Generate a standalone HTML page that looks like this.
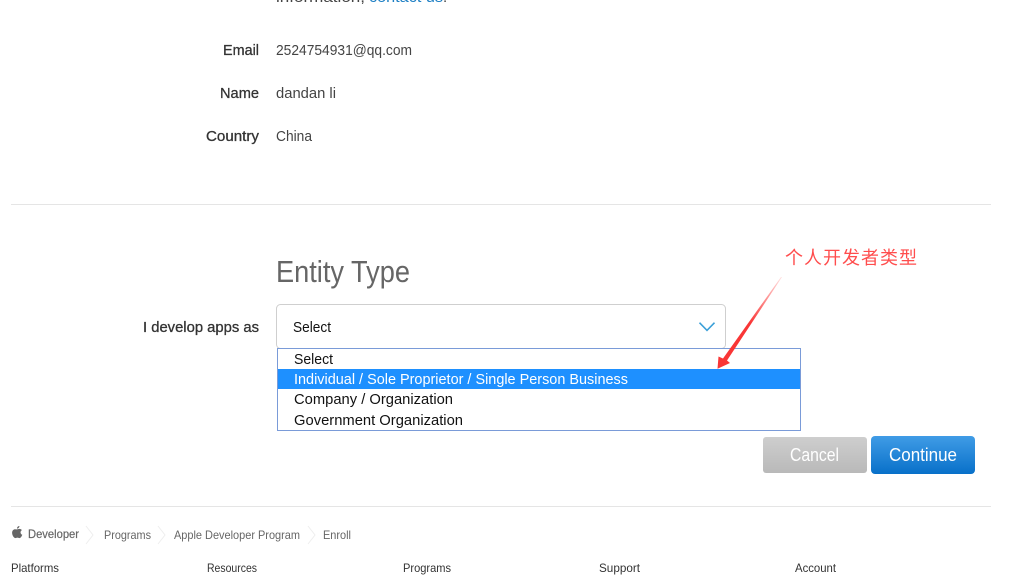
<!DOCTYPE html>
<html lang="en">
<head>
<meta charset="utf-8">
<title>Enroll</title>
<style>
html,body{margin:0;padding:0;width:1028px;height:582px;overflow:hidden;background:#fff}
svg{display:block;position:absolute;left:0;top:0}
text{font-family:"Liberation Sans","Noto Sans CJK SC",sans-serif;white-space:pre}
.v{font-size:15px;fill:#444}
.l{font-size:15px;fill:#333;stroke:#333;stroke-width:.3}
.o{font-size:15px;fill:#111}
.c{font-size:12px;fill:#666}
.f{font-size:12px;fill:#333}
</style>
</head>
<body>
<svg width="1028" height="582" viewBox="0 0 1028 582" xmlns="http://www.w3.org/2000/svg">
<defs>
<linearGradient id="gc" x1="0" y1="0" x2="0" y2="1"><stop offset="0" stop-color="#cecece"/><stop offset="1" stop-color="#b9b9b9"/></linearGradient>
<linearGradient id="gb" x1="0" y1="0" x2="0" y2="1"><stop offset="0" stop-color="#409ce6"/><stop offset="1" stop-color="#0870c9"/></linearGradient>
<linearGradient id="ga" gradientUnits="userSpaceOnUse" x1="782" y1="277" x2="750" y2="323"><stop offset="0" stop-color="#ff3b3b" stop-opacity=".15"/><stop offset="1" stop-color="#f93636"/></linearGradient>
</defs>

<text x="276" y="2" class="v" textLength="89" lengthAdjust="spacingAndGlyphs">information,</text>
<text x="369" y="2" class="v" style="fill:#1d7fc4" textLength="74" lengthAdjust="spacingAndGlyphs">contact us</text>
<text x="443" y="2" class="v">.</text>

<text x="223" y="55" class="l" textLength="36" lengthAdjust="spacingAndGlyphs">Email</text>
<text x="276" y="55" class="v" textLength="136" lengthAdjust="spacingAndGlyphs">2524754931@qq.com</text>
<text x="220" y="98" class="l" textLength="39" lengthAdjust="spacingAndGlyphs">Name</text>
<text x="276" y="98" class="v" textLength="60" lengthAdjust="spacingAndGlyphs">dandan li</text>
<text x="206" y="141" class="l" textLength="53" lengthAdjust="spacingAndGlyphs">Country</text>
<text x="276" y="141" class="v" textLength="36" lengthAdjust="spacingAndGlyphs">China</text>

<rect x="11" y="204" width="980" height="1" fill="#e5e5e5"/>

<text x="276" y="282" font-size="31" fill="#666" textLength="134" lengthAdjust="spacingAndGlyphs">Entity Type</text>

<text x="143" y="332" class="l" textLength="116" lengthAdjust="spacingAndGlyphs">I develop apps as</text>

<rect x="276.5" y="304.5" width="449" height="44" rx="4" ry="4" fill="#fff" stroke="#cfcfcf"/>
<text x="293" y="332" class="o" textLength="38" lengthAdjust="spacingAndGlyphs">Select</text>
<path d="M699.5 322.7L707 330.4L714.5 322.7" fill="none" stroke="#3a9fd8" stroke-width="1.6"/>

<rect x="277.5" y="348.5" width="523" height="82" fill="#fff" stroke="#7a9bd8"/>
<rect x="278" y="369" width="522" height="20" fill="#1e90ff"/>
<text x="294" y="364" class="o" textLength="39" lengthAdjust="spacingAndGlyphs">Select</text>
<text x="294" y="384" class="o" style="fill:#fff" textLength="334" lengthAdjust="spacingAndGlyphs">Individual / Sole Proprietor / Single Person Business</text>
<text x="294" y="404" class="o" textLength="159" lengthAdjust="spacingAndGlyphs">Company / Organization</text>
<text x="294" y="425" class="o" textLength="169" lengthAdjust="spacingAndGlyphs">Government Organization</text>

<text x="785" y="264" font-size="18" fill="#ff4d4d" textLength="132">个人开发者类型</text>
<polygon points="782,277 781,277 723,358.5 718.5,356.5 717.5,368.8 730,363 727,360.5" fill="url(#ga)"/>

<rect x="763" y="437" width="104" height="36" rx="3" ry="3" fill="url(#gc)"/>
<text x="790" y="461" font-size="18" fill="#fff" textLength="49" lengthAdjust="spacingAndGlyphs">Cancel</text>
<rect x="871" y="436" width="104" height="38" rx="4" ry="4" fill="url(#gb)"/>
<text x="889" y="461" font-size="18" fill="#fff" textLength="68" lengthAdjust="spacingAndGlyphs">Continue</text>

<rect x="11" y="506" width="980" height="1" fill="#e5e5e5"/>

<path d="M17 529.4c.7 0 1.4-.5 2.5-.5 1 0 1.9.5 2.4 1.2-2 1.2-1.7 3.9.4 4.7-.6 1.5-1.6 3.3-2.7 3.3-.9 0-1.2-.5-2.2-.5-1 0-1.4.5-2.1.5-1.5 0-3.2-2.9-3.2-5.3 0-2.4 1.6-3.6 3-3.6.7 0 1.4.2 1.9.2zM19.4 526c.1 1.4-1.1 2.7-2.4 2.6-.1-1.3 1.1-2.6 2.4-2.6z" fill="#666"/>
<text x="28" y="538" font-size="12" fill="#666" stroke="#666" stroke-width=".2" textLength="51" lengthAdjust="spacingAndGlyphs">Developer</text>
<path d="M86 526L93 535L86 544" fill="none" stroke="#eee"/>
<text x="104" y="539" class="c" textLength="47" lengthAdjust="spacingAndGlyphs">Programs</text>
<path d="M158 526L165 535L158 544" fill="none" stroke="#eee"/>
<text x="174" y="539" class="c" textLength="126" lengthAdjust="spacingAndGlyphs">Apple Developer Program</text>
<path d="M308 526L315 535L308 544" fill="none" stroke="#eee"/>
<text x="323" y="539" class="c" textLength="28" lengthAdjust="spacingAndGlyphs">Enroll</text>

<text x="11" y="572" class="f" textLength="48" lengthAdjust="spacingAndGlyphs">Platforms</text>
<text x="207" y="572" class="f" textLength="50" lengthAdjust="spacingAndGlyphs">Resources</text>
<text x="403" y="572" class="f" textLength="48" lengthAdjust="spacingAndGlyphs">Programs</text>
<text x="599" y="572" class="f" textLength="41" lengthAdjust="spacingAndGlyphs">Support</text>
<text x="795" y="572" class="f" textLength="41" lengthAdjust="spacingAndGlyphs">Account</text>
</svg>
</body>
</html>
